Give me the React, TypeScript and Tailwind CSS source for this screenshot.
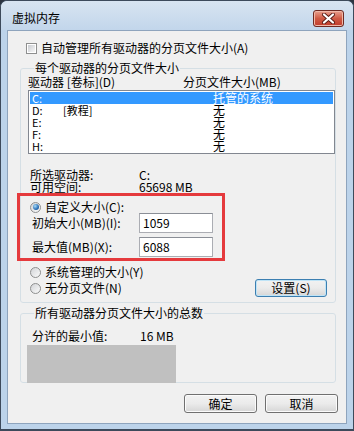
import React from "react";

// Drive rows shown in the list box
interface DriveRow {
  drive: string;
  label: string;
  size: string;
  selected?: boolean;
}

const drives: DriveRow[] = [
  { drive: "C:", label: "", size: "托管的系统", selected: true },
  { drive: "D:", label: "[教程]", size: "无" },
  { drive: "E:", label: "", size: "无" },
  { drive: "F:", label: "", size: "无" },
  { drive: "H:", label: "", size: "无" },
];

const Checkbox = () => (
  <span className="inline-block w-[11px] h-[11px] border border-[#8e8f8f] bg-white p-[1px] shrink-0">
    <span className="block w-full h-full bg-linear-to-br from-[#c9ccd1] to-[#f7f7f7]" />
  </span>
);

const Radio = ({ checked }: { checked?: boolean }) => (
  <span className="flex items-center justify-center w-[11px] h-[11px] rounded-full border border-[#8e8f8f] bg-linear-to-br from-[#d2d4d7] to-[#fbfbfb] shrink-0">
    {checked && (
      <span className="block w-[6px] h-[6px] rounded-full bg-[radial-gradient(circle_at_35%_35%,#a8dcfa,#2a6fb5_60%,#154a86)]" />
    )}
  </span>
);

const WinButton = ({ label, focused, className }: { label: string; focused?: boolean; className: string }) => (
  <button
    className={
      "flex items-center justify-center rounded-[3px] border leading-[12px] text-[12px] bg-linear-to-b from-[#f2f2f2] via-[#ebebeb] to-[#d6d6d6] " +
      (focused ? "border-[#3c7fb1] shadow-[inset_0_0_0_1px_#bfe4f7]" : "border-[#707070] shadow-[inset_0_0_0_1px_#fbfbfb]") +
      " " +
      className
    }
  >
    {label}
  </button>
);

export default function App() {
  return (
    <div className="w-[354px] h-[431px] bg-[#2c3440] font-['Noto_Sans_CJK_SC','Liberation_Sans',sans-serif] text-[12px] text-black">
      <div className="flex flex-col w-full h-full rounded-t-[7px] border border-b-2 border-[#3d4a5b] bg-[#bcd3ea] overflow-hidden">
        {/* title bar */}
        <div className="flex justify-between h-[29px] shrink-0 bg-linear-to-b from-[#d8e4f1] to-[#c2d6eb]">
          <div className="mt-[11px] ml-[11px] leading-[12px]">虚拟内存</div>
          <div className="mt-[9px] mr-[9px] w-[31px] h-[17px] rounded-[3px] border border-[#6e2a22] bg-linear-to-b from-[#e8a08f] via-[#cf5a44] to-[#c0392b] flex items-center justify-center shadow-[inset_0_0_0_1px_#f0b8a8]">
            <svg width="13" height="11" viewBox="0 0 13 11">
              <path d="M2 1.5 L11 9.5 M11 1.5 L2 9.5" stroke="#5a1d16" strokeWidth="4" strokeLinecap="round" />
              <path d="M2 1.5 L11 9.5 M11 1.5 L2 9.5" stroke="#ffffff" strokeWidth="2.2" strokeLinecap="round" />
            </svg>
          </div>
        </div>

        {/* client area */}
        <div className="relative mx-[6px] h-[394px] shrink-0 border border-[#8ea4bd] bg-[#f0f0f0] flex flex-col">
          <div className="flex items-center gap-[4px] h-[12px] mt-[11px] pl-[18px] leading-[12px]">
            <Checkbox />
            <span>自动管理所有驱动器的分页文件大小(A)</span>
          </div>

          <fieldset className="mt-[8px] ml-[12px] w-[316px] border border-[#d5dfe5] rounded-[3px] pl-[7px] pb-[5px]">
            <legend className="ml-[6px] px-[1px] leading-[12px]">每个驱动器的分页文件大小</legend>
            <div className="flex h-[12px] leading-[12px] mt-[2px]">
              <span className="w-[155px]">驱动器 [卷标](D)</span>
              <span>分页文件大小(MB)</span>
            </div>
            <div className="mt-[2px] w-[307px] h-[64px] border border-[#828790] bg-white p-[1px]">
              {drives.map((row) => (
                <div
                  key={row.drive}
                  className={"flex h-[12px] leading-[12px] text-[11px] pl-[2px] " + (row.selected ? "bg-[#3399ff] text-white" : "")}
                >
                  <span className="w-[31px]">{row.drive}</span>
                  <span className="w-[150px]">{row.label}</span>
                  <span className="text-[12px]">{row.size}</span>
                </div>
              ))}
            </div>

            <div className="flex h-[12px] leading-[12px] mt-[15px] pl-[2px]">
              <span className="w-[109px]">所选驱动器:</span>
              <span>C:</span>
            </div>
            <div className="flex h-[12px] leading-[12px] pl-[2px]">
              <span className="w-[109px]">可用空间:</span>
              <span>65698 MB</span>
            </div>

            <div className="flex items-center gap-[4px] h-[12px] leading-[12px] mt-[8px] pl-[2px]">
              <Radio checked />
              <span>自定义大小(C):</span>
            </div>
            <div className="flex items-center h-[20px] pl-[4px]">
              <span className="w-[107px] leading-[12px]">初始大小(MB)(I):</span>
              <div className="w-[74px] h-[20px] border border-[#abadb3] border-t-[#8a8e96] bg-white pl-[3px] leading-[18px]">1059</div>
            </div>
            <div className="flex items-center h-[20px] mt-[4px] pl-[4px]">
              <span className="w-[107px] leading-[12px]">最大值(MB)(X):</span>
              <div className="w-[74px] h-[20px] border border-[#abadb3] border-t-[#8a8e96] bg-white pl-[3px] leading-[18px]">6088</div>
            </div>

            <div className="flex items-center gap-[4px] h-[12px] leading-[12px] mt-[9px] pl-[2px]">
              <Radio />
              <span>系统管理的大小(Y)</span>
            </div>
            <div className="flex items-center justify-between h-[18px] mt-[1px] pl-[2px] pr-[8px]">
              <div className="flex items-center gap-[4px] leading-[12px]">
                <Radio />
                <span>无分页文件(N)</span>
              </div>
              <WinButton label="设置(S)" focused className="w-[72px] h-[18px]" />
            </div>
          </fieldset>

          <fieldset className="mt-[4px] ml-[12px] w-[316px] border border-[#d5dfe5] rounded-[3px] pl-[7px]">
            <legend className="ml-[6px] px-[1px] leading-[12px]">所有驱动器分页文件大小的总数</legend>
            <div className="flex h-[12px] leading-[12px] mt-[11px] pl-[4px]">
              <span className="w-[108px]">分许的最小值:</span>
              <span>16 MB</span>
            </div>
            <div className="mt-[3px] -ml-[1px] -mb-[1px] w-[149px] h-[38px] bg-[#c0c0c0]" />
          </fieldset>

          <div className="flex justify-end gap-[8px] mt-[11px] mr-[8px]">
            <WinButton label="确定" className="w-[73px] h-[19px]" />
            <WinButton label="取消" className="w-[73px] h-[19px]" />
          </div>

          {/* red annotation frame */}
          <div className="absolute left-[9px] top-[162px] w-[208px] h-[68px] border-[3px] border-[#e53a3d]" />
        </div>
      </div>
    </div>
  );
}
